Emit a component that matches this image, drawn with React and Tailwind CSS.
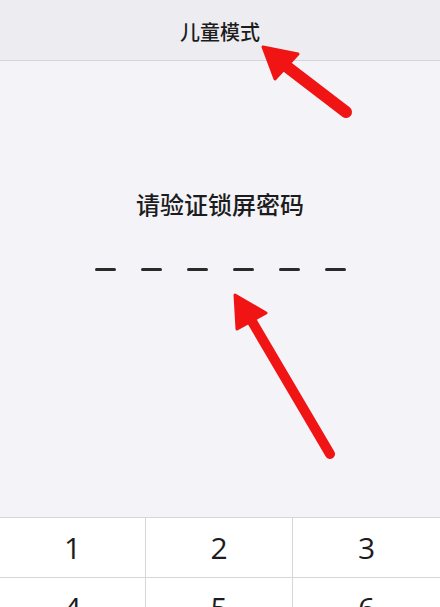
import React from 'react';

const keys = [
    ['1', '2', '3'],
    ['4', '5', '6'],
    ['7', '8', '9'],
    ['', '0', ''],
];

export default function App() {
    return (
        <div
            className="relative flex flex-col h-[607px] w-[440px] overflow-hidden bg-[#f4f3f7] text-[#1c1c1e]"
            style={{ fontFamily: '"Noto Sans CJK SC", "Noto Sans", sans-serif' }}
        >
            {/* Header */}
            <div className="flex items-center justify-center h-[61px] bg-[#edecf0] border-b border-[#d4d3d7] shrink-0">
                <span className="text-[20px] font-medium leading-none mt-[4px]">儿童模式</span>
            </div>

            {/* Prompt */}
            <div className="flex flex-col items-center pt-[131px]">
                <span className="text-[24px] font-medium leading-none">请验证锁屏密码</span>
                <div className="flex gap-[25px] mt-[52px]">
                    {[0, 1, 2, 3, 4, 5].map((i) => (
                        <div key={i} className="w-[21px] h-[3px] bg-[#2a2a2a] rounded-full" />
                    ))}
                </div>
            </div>

            {/* Keypad */}
            <div className="absolute left-0 right-0 top-[517px] bg-white border-t border-[#d6d6d8]">
                {keys.map((row, r) => (
                    <div key={r} className="grid grid-cols-[146px_147px_1fr] h-[60px] border-b border-[#d6d6d8]">
                        {row.map((k, c) => (
                            <div
                                key={c}
                                className={`flex items-center justify-center text-[30px] font-normal ${c < 2 ? 'border-r border-[#d6d6d8]' : ''}`}
                                style={{ fontFamily: '"Open Sans", "Liberation Sans", sans-serif' }}
                            >
                                {k}
                            </div>
                        ))}
                    </div>
                ))}
            </div>

            {/* Annotation arrows */}
            <svg className="absolute inset-0 pointer-events-none" width="440" height="607" viewBox="0 0 440 607">
                <line x1="346" y1="112" x2="282" y2="63" stroke="#f01414" strokeWidth="12" strokeLinecap="round" />
                <polygon points="263,47 298,54 275,79" fill="#f01414" stroke="#f01414" strokeWidth="3" strokeLinejoin="round" />
                <line x1="330" y1="454" x2="250" y2="318" stroke="#f01414" strokeWidth="10" strokeLinecap="round" />
                <polygon points="235,295 266,313 237,329" fill="#f01414" stroke="#f01414" strokeWidth="3" strokeLinejoin="round" />
            </svg>
        </div>
    );
}
